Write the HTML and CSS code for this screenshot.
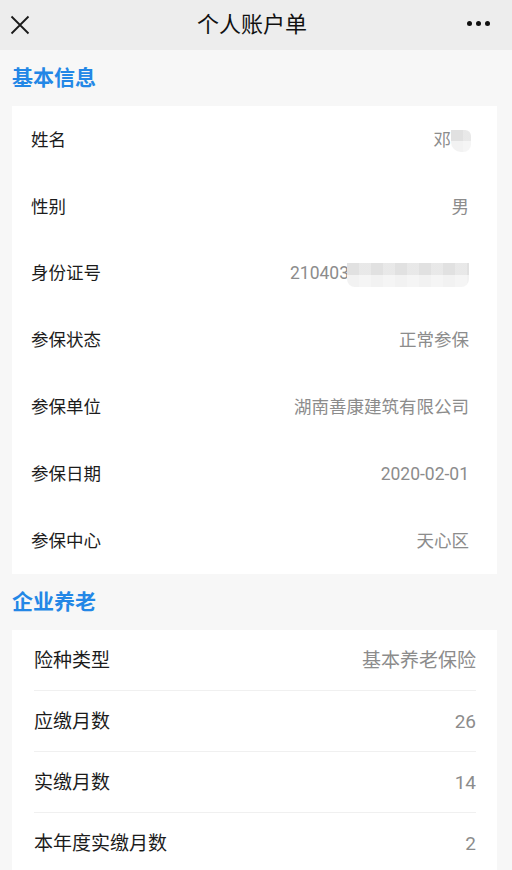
FILE: index.html
```html
<!DOCTYPE html>
<html lang="zh-CN">
<head>
    <meta charset="UTF-8">
    <meta name="viewport" content="width=device-width, initial-scale=1.0">
    <title>个人账户单</title>
    <link rel="stylesheet" href="styles.css">
</head>
<body>
    <div class="topbar">
        <svg class="close" width="20" height="20" viewBox="0 0 20 20">
            <path d="M1.5 1.5 L18.5 18.5 M18.5 1.5 L1.5 18.5" stroke="#1a1a1a" stroke-width="1.8" fill="none"/>
        </svg>
        <div class="title">个人账户单</div>
        <div class="more"><span></span><span></span><span></span></div>
    </div>

    <h2 class="section">基本信息</h2>
    <div class="card info">
        <div class="row"><span class="label">姓名</span><span class="value">邓<i class="mask mask-name"></i></span></div>
        <div class="row"><span class="label">性别</span><span class="value">男</span></div>
        <div class="row"><span class="label">身份证号</span><span class="value">210403<i class="mask mask-id"></i></span></div>
        <div class="row"><span class="label">参保状态</span><span class="value">正常参保</span></div>
        <div class="row"><span class="label">参保单位</span><span class="value">湖南善康建筑有限公司</span></div>
        <div class="row"><span class="label">参保日期</span><span class="value">2020-02-01</span></div>
        <div class="row"><span class="label">参保中心</span><span class="value">天心区</span></div>
    </div>

    <h2 class="section">企业养老</h2>
    <div class="card pension">
        <div class="row"><span class="label">险种类型</span><span class="value">基本养老保险</span></div>
        <div class="row"><span class="label">应缴月数</span><span class="value">26</span></div>
        <div class="row"><span class="label">实缴月数</span><span class="value">14</span></div>
        <div class="row"><span class="label">本年度实缴月数</span><span class="value">2</span></div>
    </div>
</body>
</html>
```

FILE: styles.css
```css
body {
    margin: 0;
    background: #f7f7f7;
    font-family: Roboto, "Noto Sans CJK SC", sans-serif;
    color: #1c1c1c;
    overflow: hidden;
}
.topbar {
    height: 50px;
    background: #ededed;
    display: grid;
    grid-template-columns: 1fr auto 1fr;
    align-items: center;
    padding: 0 22px 0 10px;
}
.close {
    display: block;
}
.title {
    font-size: 22px;
    line-height: 1;
    color: #111;
    margin-left: 4px;
}
.more {
    justify-self: end;
    display: flex;
    gap: 4px;
    margin-top: -4px;
}
.more span {
    width: 5px;
    height: 5px;
    border-radius: 50%;
    background: #111;
}
.section {
    margin: 0;
    height: 56px;
    line-height: 56px;
    padding-left: 12px;
    font-size: 21px;
    font-weight: bold;
    color: #2387e6;
}
.card {
    background: #fff;
    margin: 0 15px 0 12px;
}
.row {
    display: flex;
    justify-content: space-between;
    align-items: center;
    line-height: 1;
}
.info .row {
    height: 66.9px;
    padding: 0 28px 0 19px;
    font-size: 17.5px;
}
.info .row span {
    margin-top: 2px;
}
.pension .row {
    height: 60px;
    margin: 0 21px 0 22px;
    border-bottom: 1px solid #f0f0f0;
    font-size: 19px;
}
.value {
    color: #8c8c8c;
    display: flex;
    align-items: center;
}
.mask {
    display: inline-block;
    background:
        repeating-linear-gradient(to right, rgba(255,255,255,0) 0 12px, rgba(255,255,255,0.25) 12px 24px),
        linear-gradient(to bottom, #e1e1e1 50%, #f2f2f2 50%);
    border-radius: 0 0 8px 8px;
}
.mask-name {
    width: 20px;
    height: 22px;
    margin-top: 2px;
    margin-right: -2px;
    border-radius: 0 6px 8px 10px;
}
.mask-id {
    width: 122px;
    height: 24px;
    margin-left: -2px;
    margin-top: 2px;
}
```
